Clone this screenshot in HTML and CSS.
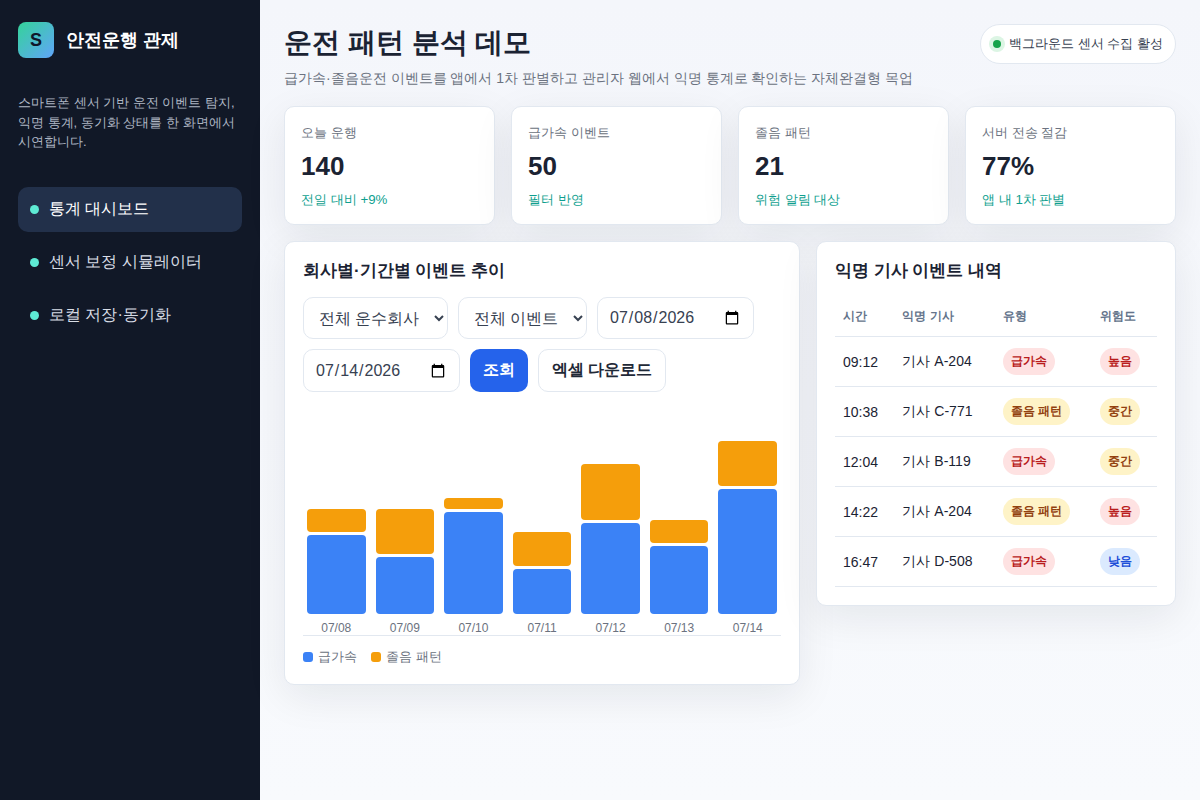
FILE: index.html
```html
<!DOCTYPE html>
<html lang="ko">
<head>
  <meta charset="UTF-8" />
  <meta name="viewport" content="width=device-width, initial-scale=1.0" />
  <title>안전운행 관제</title>
  <link rel="stylesheet" href="styles.css">
</head>
<body>
  <div class="layout">
    <aside class="sidebar">
      <div class="brand">
        <div class="brand-logo">S</div>
        <div class="brand-name">안전운행 관제</div>
      </div>
      <p class="sidebar-desc">스마트폰 센서 기반 운전 이벤트 탐지, 익명 통계, 동기화 상태를 한 화면에서 시연합니다.</p>
      <nav class="nav">
        <a class="nav-item active"><span class="nav-dot"></span>통계 대시보드</a>
        <a class="nav-item"><span class="nav-dot"></span>센서 보정 시뮬레이터</a>
        <a class="nav-item"><span class="nav-dot"></span>로컬 저장·동기화</a>
      </nav>
    </aside>

    <main class="main">
      <header class="topbar">
        <div>
          <h1>운전 패턴 분석 데모</h1>
          <p class="subtitle">급가속·졸음운전 이벤트를 앱에서 1차 판별하고 관리자 웹에서 익명 통계로 확인하는 자체완결형 목업</p>
        </div>
        <div class="status-pill"><span class="status-dot"></span>백그라운드 센서 수집 활성</div>
      </header>

      <section class="stats">
        <div class="stat-card">
          <div class="stat-label">오늘 운행</div>
          <div class="stat-value">140</div>
          <div class="stat-note">전일 대비 +9%</div>
        </div>
        <div class="stat-card">
          <div class="stat-label">급가속 이벤트</div>
          <div class="stat-value">50</div>
          <div class="stat-note">필터 반영</div>
        </div>
        <div class="stat-card">
          <div class="stat-label">졸음 패턴</div>
          <div class="stat-value">21</div>
          <div class="stat-note">위험 알림 대상</div>
        </div>
        <div class="stat-card">
          <div class="stat-label">서버 전송 절감</div>
          <div class="stat-value">77%</div>
          <div class="stat-note">앱 내 1차 판별</div>
        </div>
      </section>

      <section class="panels">
        <div class="panel">
          <h2>회사별·기간별 이벤트 추이</h2>
          <div class="filters">
            <select class="field">
              <option>전체 운수회사</option>
            </select>
            <select class="field">
              <option>전체 이벤트</option>
            </select>
            <input class="field" type="date" value="2026-07-08" />
            <input class="field" type="date" value="2026-07-14" />
            <button class="btn btn-primary">조회</button>
            <button class="btn">엑셀 다운로드</button>
          </div>
          <div class="chart">
            <div class="bar-col">
              <div class="seg seg-orange" style="height: 23px"></div>
              <div class="seg seg-blue" style="height: 79px"></div>
              <div class="bar-label">07/08</div>
            </div>
            <div class="bar-col">
              <div class="seg seg-orange" style="height: 45px"></div>
              <div class="seg seg-blue" style="height: 57px"></div>
              <div class="bar-label">07/09</div>
            </div>
            <div class="bar-col">
              <div class="seg seg-orange" style="height: 11px"></div>
              <div class="seg seg-blue" style="height: 102px"></div>
              <div class="bar-label">07/10</div>
            </div>
            <div class="bar-col">
              <div class="seg seg-orange" style="height: 34px"></div>
              <div class="seg seg-blue" style="height: 45px"></div>
              <div class="bar-label">07/11</div>
            </div>
            <div class="bar-col">
              <div class="seg seg-orange" style="height: 56px"></div>
              <div class="seg seg-blue" style="height: 91px"></div>
              <div class="bar-label">07/12</div>
            </div>
            <div class="bar-col">
              <div class="seg seg-orange" style="height: 23px"></div>
              <div class="seg seg-blue" style="height: 68px"></div>
              <div class="bar-label">07/13</div>
            </div>
            <div class="bar-col">
              <div class="seg seg-orange" style="height: 45px"></div>
              <div class="seg seg-blue" style="height: 125px"></div>
              <div class="bar-label">07/14</div>
            </div>
          </div>
          <div class="legend">
            <span class="legend-item"><span class="legend-dot seg-blue"></span>급가속</span>
            <span class="legend-item"><span class="legend-dot seg-orange"></span>졸음 패턴</span>
          </div>
        </div>

        <div class="panel">
          <h2>익명 기사 이벤트 내역</h2>
          <table class="events">
            <thead>
              <tr><th>시간</th><th>익명 기사</th><th>유형</th><th>위험도</th></tr>
            </thead>
            <tbody>
              <tr>
                <td>09:12</td><td>기사 A-204</td>
                <td><span class="badge badge-red">급가속</span></td>
                <td><span class="badge badge-red">높음</span></td>
              </tr>
              <tr>
                <td>10:38</td><td>기사 C-771</td>
                <td><span class="badge badge-yellow">졸음 패턴</span></td>
                <td><span class="badge badge-yellow">중간</span></td>
              </tr>
              <tr>
                <td>12:04</td><td>기사 B-119</td>
                <td><span class="badge badge-red">급가속</span></td>
                <td><span class="badge badge-yellow">중간</span></td>
              </tr>
              <tr>
                <td>14:22</td><td>기사 A-204</td>
                <td><span class="badge badge-yellow">졸음 패턴</span></td>
                <td><span class="badge badge-red">높음</span></td>
              </tr>
              <tr>
                <td>16:47</td><td>기사 D-508</td>
                <td><span class="badge badge-red">급가속</span></td>
                <td><span class="badge badge-blue">낮음</span></td>
              </tr>
            </tbody>
          </table>
        </div>
      </section>
    </main>
  </div>
</body>
</html>
```

FILE: styles.css
```css
* {
  box-sizing: border-box;
}

body {
  margin: 0;
  background: #f5f7fb;
  color: #1b2333;
  font-family: "Liberation Sans", sans-serif;
}

.layout {
  display: grid;
  grid-template-columns: 260px 1fr;
  min-height: 800px;
}

.sidebar {
  background: #111827;
  padding: 22px 18px;
  color: #fff;
}

.brand {
  display: flex;
  align-items: center;
  gap: 12px;
  margin-bottom: 35px;
}

.brand-logo {
  width: 36px;
  height: 36px;
  border-radius: 8px;
  background: linear-gradient(135deg, #34d399, #60a5fa);
  color: #0f172a;
  font-size: 18px;
  font-weight: 800;
  display: flex;
  align-items: center;
  justify-content: center;
}

.brand-name {
  font-size: 18px;
  font-weight: 700;
}

.sidebar-desc {
  margin: 0 0 35px;
  color: #aeb6c4;
  font-size: 13px;
  line-height: 1.5;
}

.nav {
  display: flex;
  flex-direction: column;
  gap: 8px;
}

.nav-item {
  display: flex;
  align-items: center;
  gap: 10px;
  height: 45px;
  padding: 0 12px;
  border-radius: 10px;
  color: #d8dde6;
  font-size: 16px;
}

.nav-item.active {
  background: #22304a;
  color: #fff;
}

.nav-dot {
  width: 9px;
  height: 9px;
  border-radius: 50%;
  background: #5eead4;
}

.main {
  padding: 24px;
  background: linear-gradient(180deg, #f4f6fb, #f8fafd);
}

.topbar {
  display: flex;
  justify-content: space-between;
  align-items: flex-start;
  margin-bottom: 18px;
}

h1 {
  margin: 0 0 6px;
  font-size: 28px;
  font-weight: 700;
  line-height: 38px;
  color: #1b2333;
}

.subtitle {
  margin: 0;
  color: #6b7280;
  font-size: 14px;
  line-height: 20px;
}

.status-pill {
  display: flex;
  align-items: center;
  gap: 8px;
  height: 40px;
  padding: 0 12px 0 11px;
  background: #fff;
  border: 1px solid #e2e8f0;
  border-radius: 20px;
  color: #374151;
  font-size: 13px;
}

.status-dot {
  width: 8px;
  height: 8px;
  margin-left: 1px;
  border-radius: 50%;
  background: #16a34a;
  box-shadow: 0 0 0 4px #dcf5e4;
}

.stats {
  display: grid;
  grid-template-columns: repeat(4, 1fr);
  gap: 16px;
  margin-bottom: 16px;
}

.stat-card {
  height: 119px;
  padding: 17px 16px 16px;
  background: #fff;
  border: 1px solid #e2e8f0;
  border-radius: 10px;
  box-shadow: 0 12px 40px rgba(15, 23, 42, 0.08);
}

.stat-label {
  color: #6b7280;
  font-size: 13px;
  line-height: 18px;
}

.stat-value {
  margin: 7px 0 8px;
  font-size: 26px;
  font-weight: 700;
  line-height: 34px;
}

.stat-note {
  color: #0f9f8f;
  font-size: 13.3px;
  line-height: 18px;
}

.panels {
  display: grid;
  grid-template-columns: 516px 1fr;
  gap: 16px;
  align-items: start;
}

.panel {
  padding: 18px;
  background: #fff;
  border: 1px solid #e2e8f0;
  border-radius: 10px;
  box-shadow: 0 12px 40px rgba(15, 23, 42, 0.08);
}

h2 {
  margin: -1px 0 15px;
  font-size: 17px;
  font-weight: 700;
  line-height: 23px;
}

.filters {
  display: flex;
  flex-wrap: wrap;
  gap: 10px;
}

.field {
  min-height: 42px;
  padding: 0 11px;
  background: #fff;
  border: 1px solid #e2e8f0;
  border-radius: 10px;
  color: #374151;
  font-family: inherit;
  font-size: 16px;
}

.btn {
  height: 43px;
  padding: 0 13px;
  background: #fff;
  border: 1px solid #e2e8f0;
  border-radius: 10px;
  color: #1f2937;
  font-family: inherit;
  font-size: 16px;
  font-weight: 700;
}

.btn-primary {
  background: #2563eb;
  border: none;
  color: #fff;
}

.chart {
  display: flex;
  align-items: flex-end;
  gap: 10px;
  height: 220px;
  margin-top: 24px;
  padding: 0 4px;
  border-bottom: 1px solid #e2e8f0;
}

.bar-col {
  flex: 1;
  display: flex;
  flex-direction: column;
  gap: 3px;
}

.seg {
  border-radius: 4px;
}

.seg-blue {
  background: #3b82f6;
}

.seg-orange {
  background: #f59e0b;
}

.bar-label {
  margin-top: 4px;
  color: #6b7280;
  font-size: 12px;
  line-height: 14px;
  text-align: center;
}

.legend {
  display: flex;
  gap: 14px;
  margin-top: 12px;
  color: #6b7280;
  font-size: 13px;
  line-height: 18px;
}

.legend-item {
  display: flex;
  align-items: center;
  gap: 5px;
}

.legend-dot {
  width: 10px;
  height: 10px;
  border-radius: 3px;
}

.events {
  width: 100%;
  border-collapse: collapse;
  font-size: 14px;
}

.events th {
  height: 39px;
  padding: 0 8px;
  border-bottom: 1px solid #e2e8f0;
  color: #64748b;
  font-size: 12px;
  font-weight: 600;
  text-align: left;
}

.events td {
  height: 50px;
  padding: 0 8px;
  border-bottom: 1px solid #e2e8f0;
}

.events td:nth-child(-n+2) {
  padding-top: 2px;
}

.badge {
  display: inline-block;
  padding: 0 8px;
  border-radius: 14px;
  font-size: 12px;
  font-weight: 600;
  line-height: 27px;
}

.badge-red {
  background: #fee2e2;
  color: #b91c1c;
}

.badge-yellow {
  background: #fef3c7;
  color: #92400e;
}

.badge-blue {
  background: #dbeafe;
  color: #1d4ed8;
}
```
